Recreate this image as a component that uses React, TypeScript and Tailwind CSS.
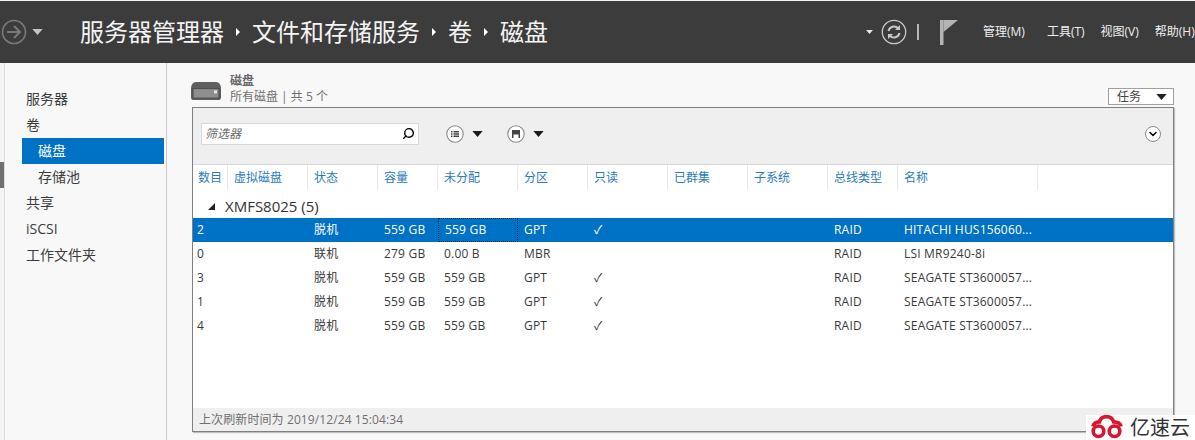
import { ChevronDown, Search } from 'lucide-react';

const font = { fontFamily: '"Open Sans", "Noto Sans CJK SC", sans-serif' };

const columns = [
  { label: '数目', w: 'w-[35px]' },
  { label: '虚拟磁盘', w: 'w-[80px]' },
  { label: '状态', w: 'w-[70px]' },
  { label: '容量', w: 'w-[60px]' },
  { label: '未分配', w: 'w-[80px]' },
  { label: '分区', w: 'w-[70px]' },
  { label: '只读', w: 'w-[80px]' },
  { label: '已群集', w: 'w-[80px]' },
  { label: '子系统', w: 'w-[80px]' },
  { label: '总线类型', w: 'w-[70px]' },
  { label: '名称', w: 'w-[140px]' },
];

const rows = [
  ['2', '', '脱机', '559 GB', '559 GB', 'GPT', '✓', '', '', 'RAID', 'HITACHI HUS156060...'],
  ['0', '', '联机', '279 GB', '0.00 B', 'MBR', '', '', '', 'RAID', 'LSI MR9240-8i'],
  ['3', '', '脱机', '559 GB', '559 GB', 'GPT', '✓', '', '', 'RAID', 'SEAGATE ST3600057...'],
  ['1', '', '脱机', '559 GB', '559 GB', 'GPT', '✓', '', '', 'RAID', 'SEAGATE ST3600057...'],
  ['4', '', '脱机', '559 GB', '559 GB', 'GPT', '✓', '', '', 'RAID', 'SEAGATE ST3600057...'],
];

const crumbs = ['服务器管理器', '文件和存储服务', '卷', '磁盘'];
const menus = [
  { label: '管理(M)', ml: '' },
  { label: '工具(T)', ml: 'ml-[22px]' },
  { label: '视图(V)', ml: 'ml-[16px]' },
  { label: '帮助(H)', ml: 'ml-[16px]' },
];

function Caret({ className }: { className: string }) {
  return (
    <svg viewBox="0 0 12 7" className={className}>
      <path d="M0 0h12L6 7z" fill="currentColor" />
    </svg>
  );
}

function Header() {
  return (
    <header className="h-[63px] bg-[#3c3c3c] border-t border-[#f4f4f4] flex items-center text-white shrink-0">
      <svg viewBox="0 0 26 26" className="w-[26px] h-[26px] ml-[1px] text-[#7a7a7a]">
        <circle cx="13" cy="13" r="11.5" fill="none" stroke="currentColor" strokeWidth="1.6" />
        <path d="M6 13h13M13 7l6 6-6 6" fill="none" stroke="currentColor" strokeWidth="2" />
      </svg>
      <Caret className="w-[11px] h-[6px] ml-[5px] text-[#c4c4c4]" />
      <div className="flex items-center ml-[37px] text-[24px] text-[#f4f4f4] leading-none">
        {crumbs.map((c, i) => (
          <div key={c} className="flex items-center">
            {i > 0 && <span className="w-0 h-0 mx-[12px] border-y-[4px] border-y-transparent border-l-[4px] border-l-white" />}
            <span>{c}</span>
          </div>
        ))}
      </div>
      <div className="ml-auto flex items-center">
        <Caret className="w-[7px] h-[4px] text-[#e8e8e8]" />
        <svg viewBox="0 0 26 26" className="w-[26px] h-[26px] ml-[8px] text-[#c8c8c8]">
          <circle cx="13" cy="13" r="11.7" fill="none" stroke="currentColor" strokeWidth="1.3" />
          <path d="M7.500 12a5.600 5.600 0 0 1 9.700-2.600M18.500 14a5.600 5.600 0 0 1-9.700 2.600" fill="none" stroke="currentColor" strokeWidth="2" />
          <path d="M19 6v5h-5zM7 20v-5h5z" fill="currentColor" />
        </svg>
        <div className="w-[2px] h-[16px] bg-[#b4b4b4] ml-[10px]" />
        <svg viewBox="0 0 18 25" className="w-[18px] h-[25px] ml-[21px] text-[#b4b4b4]">
          <path d="M0 0h3.500v25H0z" fill="currentColor" />
          <path d="M3.500 0H18L3.500 12z" fill="currentColor" />
        </svg>
        <div className="flex items-center ml-[25px] text-[12px] text-[#f0f0f0] w-[212px] overflow-hidden whitespace-nowrap">
          {menus.map((m) => (
            <span key={m.label} className={m.ml}>{m.label}</span>
          ))}
        </div>
      </div>
    </header>
  );
}

function Sidebar() {
  const items = [
    { label: '服务器' },
    { label: '卷' },
    { label: '磁盘', sub: true, active: true },
    { label: '存储池', sub: true },
    { label: '共享' },
    { label: 'iSCSI' },
    { label: '工作文件夹' },
  ];
  return (
    <aside className="w-[167px] shrink-0 flex border-r border-[#c8c8c8] bg-[#f8f8f8]">
      <div className="w-[5px] border-r border-[#dcdcdc] bg-[#f4f4f4] pt-[99px]">
        <div className="w-[4px] h-[26px] bg-[#707070]" />
      </div>
      <nav className="flex-1 pt-[23px] pl-[17px] pr-[2px] text-[14px] text-[#3c3c3c]">
        {items.map((it) => (
          <div
            key={it.label}
            className={`h-[26px] flex items-center pb-[2px] ${it.sub ? 'pl-[16px]' : 'pl-[4px]'} ${it.active ? 'bg-[#0072c6] text-white' : ''}`}
          >
            {it.label}
          </div>
        ))}
      </nav>
    </aside>
  );
}

function RoundIcon({ children }: { children: React.ReactNode }) {
  return (
    <div className="flex items-center">
      <svg viewBox="0 0 18 18" className="w-[18px] h-[18px] text-[#444]">
        <circle cx="9" cy="9" r="8.2" fill="#fff" stroke="#8a8a8a" strokeWidth="1.1" />
        {children}
      </svg>
      <Caret className="w-[11px] h-[6px] ml-[8px] text-[#1a1a1a]" />
    </div>
  );
}

function Table() {
  return (
    <div className="flex-1 min-h-0 border border-[#808080] flex flex-col bg-white shadow-[1px_1px_1px_#c0c0c0]">
      <div className="h-[57px] shrink-0 bg-[#efefef] border-b border-[#d8d8d8] flex items-center pl-[8px] pr-[12px] pb-[5px]">
        <div className="w-[218px] h-[22px] bg-white border border-[#d8d8d8] flex items-center justify-between pl-[3px] pr-[3px]">
          <span className="italic text-[12px] text-[#6a6a6a]">筛选器</span>
          <Search className="w-[13px] h-[13px] text-black -scale-x-100" strokeWidth={2.6} />
        </div>
        <div className="ml-[27px]">
          <RoundIcon>
            <path d="M5 6h1.500v1.500H5zM5 8.300h1.500v1.500H5zM5 10.600h1.500v1.500H5zM7.500 6H13v1.500H7.500zM7.500 8.300H13v1.500H7.500zM7.500 10.600H13v1.500H7.500z" fill="currentColor" />
          </RoundIcon>
        </div>
        <div className="ml-[24px]">
          <RoundIcon>
            <path d="M5 5h8v8H5z" fill="currentColor" />
            <path d="M6.500 9.500h5V13h-5z" fill="#fff" />
          </RoundIcon>
        </div>
        <div className="ml-auto w-[16px] h-[16px] rounded-full border border-[#8a8a8a] bg-white flex items-center justify-center">
          <ChevronDown className="w-[12px] h-[12px] text-black" strokeWidth={3} />
        </div>
      </div>

      <div className="h-[25px] shrink-0 flex text-[12px] text-[#2b7bb9]">
        {columns.map((c, j) => (
          <div key={c.label} className={`${c.w} shrink-0 h-[25px] flex items-center ${j === 0 ? 'pl-[5px]' : 'pl-[6px]'} border-r border-[#e8e8e8]`}>
            {c.label}
          </div>
        ))}
      </div>

      <div className="h-[28px] shrink-0 pt-[5px] flex items-center text-[15px] text-[#333]">
        <svg viewBox="0 0 7 7" className="w-[7px] h-[7px] ml-[15px] text-[#222]">
          <path d="M7 0v7H0z" fill="currentColor" />
        </svg>
        <span className="ml-[10px]">XMFS8025 (5)</span>
      </div>

      <div className="flex-1 text-[12px] text-[#3a3a3a] tracking-[0.2px]">
        {rows.map((r, i) => (
          <div key={i} className={`h-[24px] flex items-center ${i === 0 ? 'bg-[#0072c6] text-white' : ''}`}>
            {r.map((v, j) => (
              <div
                key={j}
                className={`${columns[j].w} shrink-0 h-full flex items-center ${j === 0 ? 'pl-[4px]' : 'pl-[6px]'} whitespace-nowrap overflow-hidden ${i === 0 && j === 4 ? 'border border-dotted border-[#0b2c4a]' : ''}`}
              >
                {v}
              </div>
            ))}
          </div>
        ))}
      </div>

      <div className="h-[23px] shrink-0 bg-[#efefef] flex items-center pl-[6px] text-[12px] text-[#707070] tracking-[0.1px]">
        上次刷新时间为 2019/12/24 15:04:34
      </div>
    </div>
  );
}

function Watermark() {
  return (
    <div className="absolute right-0 bottom-0 w-[109px] h-[25px] bg-white flex items-center pl-[4px]">
      <svg viewBox="0 0 36 26" className="w-[34px] h-[25px]">
        <g fill="none" stroke="#d9152f" strokeWidth="3.8">
          <circle cx="9" cy="17" r="5.600" />
          <circle cx="26" cy="17" r="5.600" />
          <path d="M3 12c1-4 4-5 7-5 1-4 4-5.500 7.500-5.500 4 0 6.500 2 7.500 5.500 4 0 7 1 8 5" />
        </g>
      </svg>
      <span className="ml-[6px] text-[20px] leading-none text-[#333]">亿速云</span>
    </div>
  );
}

export default function App() {
  return (
    <div className="relative w-[1195px] h-[440px] overflow-hidden flex flex-col bg-[#f8f8f8]" style={font}>
      <Header />
      <div className="flex-1 flex min-h-0">
        <Sidebar />
        <main className="flex-1 min-w-0 flex flex-col pl-[25px] pr-[21px] pb-[8px]">
          <div className="h-[44px] shrink-0 flex items-start pt-[10px]">
            <svg viewBox="0 0 32 20" preserveAspectRatio="none" className="w-[32px] h-[19px] mt-[8px] -ml-[2px]">
              <path d="M1 8c0-4 2-7 5-7h20c3 0 5 3 5 7v9c0 2-1 3-3 3H4c-2 0-3-1-3-3z" fill="#5f5f5f" />
              <rect x="3" y="8" width="26" height="10" fill="#8e8e8e" stroke="#4a4a4a" />
              <rect x="24" y="10" width="3" height="3" fill="#e8e8e8" />
            </svg>
            <div className="ml-[8px] flex flex-col">
              <span className="text-[12px] leading-[16px] font-semibold text-[#666]">磁盘</span>
              <span className="text-[12px] leading-[16px] text-[#707070]">所有磁盘 | 共 5 个</span>
            </div>
            <div className="ml-auto mt-[15px] w-[66px] h-[17px] border border-[#a0a0a0] bg-white flex items-center pl-[8px] pr-[6px] justify-between text-[12px] text-[#444]">
              <span>任务</span>
              <Caret className="w-[11px] h-[6px] text-[#222]" />
            </div>
          </div>
          <Table />
        </main>
      </div>
      <Watermark />
    </div>
  );
}
